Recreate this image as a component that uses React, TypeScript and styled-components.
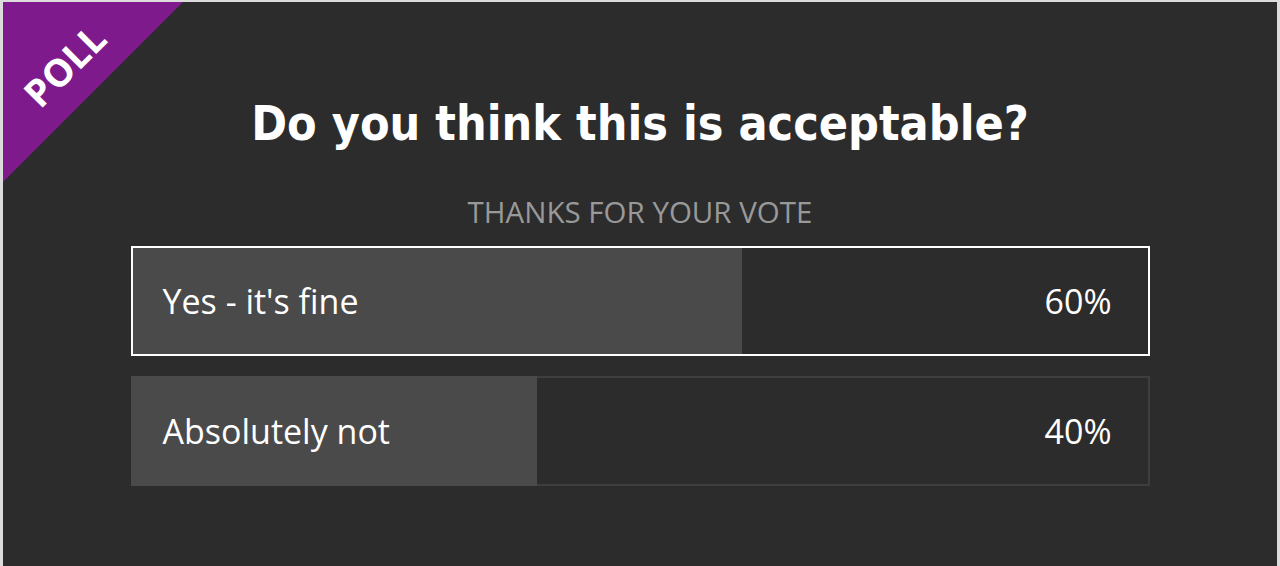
import styled, {createGlobalStyle} from "styled-components";

const GlobalStyle = createGlobalStyle`
  html, body {
    margin: 0;
    padding: 0;
    background: #dcdcdc;
  }
  #root {
    height: 566px;
  }
`;

const Card = styled.div`
  position: relative;
  overflow: hidden;
  box-sizing: border-box;
  margin: 2px 3px 0 3px;
  height: 564px;
  background: #2c2c2c;
  padding-top: 88px;
  display: flex;
  flex-direction: column;
  align-items: center;
  font-family: "Open Sans", "Liberation Sans", sans-serif;
`;

const Corner = styled.div`
  position: absolute;
  top: 0;
  left: 0;
  width: 180px;
  height: 180px;
  background: #7e1a8c;
  clip-path: polygon(0 0, 100% 0, 0 100%);
`;

const CornerLabel = styled.span`
  position: absolute;
  top: 43px;
  left: -29px;
  width: 180px;
  line-height: 40px;
  text-align: center;
  transform: rotate(-45deg);
  color: #fff;
  font-weight: 700;
  font-size: 38px;
`;

const Title = styled.h1`
  margin: 0;
  color: #fff;
  font-family: "DejaVu Sans Condensed", "DejaVu Sans", sans-serif;
  font-weight: 700;
  font-size: 48px;
  line-height: 66px;
`;

const Subtitle = styled.p`
  margin: 39px 0 17px;
  color: #999;
  font-size: 29.5px;
  line-height: 34px;
  text-transform: uppercase;
`;

const Options = styled.div`
  display: flex;
  flex-direction: column;
  gap: 20px;
  width: 1019px;
`;

const Option = styled.div<{$voted?: boolean}>`
  position: relative;
  box-sizing: border-box;
  height: 110px;
  display: flex;
  align-items: center;
  justify-content: space-between;
  padding: 0 36px 0 30px;
  border: 2px solid ${(p) => (p.$voted ? "#fff" : "#3e3e3e")};
  color: #fff;
  font-size: 34px;
`;

const Fill = styled.div<{$voted?: boolean}>`
  position: absolute;
  top: ${(p) => (p.$voted ? "0" : "-2px")};
  left: ${(p) => (p.$voted ? "0" : "-2px")};
  bottom: ${(p) => (p.$voted ? "0" : "-2px")};
  background: #4a4a4a;
`;

const Label = styled.span`
  position: relative;
`;

const options = [
  {label: "Yes - it's fine", pct: 60, voted: true},
  {label: "Absolutely not", pct: 40, voted: false},
];

const App = () => {
  return (
    <>
      <GlobalStyle />
      <Card>
        <Corner>
          <CornerLabel>POLL</CornerLabel>
        </Corner>
        <Title>Do you think this is acceptable?</Title>
        <Subtitle>Thanks for your vote</Subtitle>
        <Options>
          {options.map((o) => (
            <Option key={o.label} $voted={o.voted}>
              <Fill $voted={o.voted} style={{width: `${o.pct}%`}} />
              <Label>{o.label}</Label>
              <Label>{o.pct}%</Label>
            </Option>
          ))}
        </Options>
      </Card>
    </>
  );
};

export default App;
